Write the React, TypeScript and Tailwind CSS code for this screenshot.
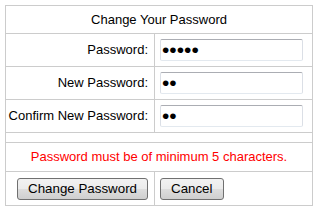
import React from "react";

const font = { fontFamily: '"Liberation Sans", Arial, sans-serif' };

function PasswordField({ value }: { value: string }) {
  return (
    <input
      type="password"
      defaultValue={value}
      readOnly
      className="h-[22px] w-[143px] rounded-[2px] border border-t-[#abadb3] border-x-[#dbdfe6] border-b-[#e3e9ef] bg-white px-[1px] text-[21px] leading-none text-black outline-none"
      style={font}
    />
  );
}

function Row({ label, value }: { label: string; value: string }) {
  return (
    <div className="flex h-[33px] border-t border-[#cccccc]">
      <div className="flex w-[148px] items-center justify-end pr-[6px] text-[13px] text-black">{label}</div>
      <div className="flex w-[158px] items-center border-l border-[#cccccc] pl-[5px]">
        <PasswordField value={value} />
      </div>
    </div>
  );
}

function ClassicButton({ children }: { children: React.ReactNode }) {
  return (
    <button
      className="h-[22px] rounded-[3px] border border-[#707070] bg-[linear-gradient(#f2f2f2_0%,#ebebeb_50%,#dddddd_51%,#cfcfcf_100%)] px-[10px] text-[13.33px] leading-none text-black"
      style={font}
    >
      {children}
    </button>
  );
}

export default function App() {
  return (
    <div className="h-[211px] w-[318px] bg-white pl-[5px] pt-[5px]" style={font}>
      <div className="w-[308px] border border-[#cccccc]">
        <div className="flex h-[27px] items-center justify-center text-[13px] text-black">Change Your Password</div>
        <Row label="Password:" value="abcde" />
        <Row label="New Password:" value="ab" />
        <Row label="Confirm New Password:" value="ab" />
        <div className="h-[10px] border-t border-[#cccccc]" />
        <div className="flex h-[29px] items-center justify-center border-t border-[#cccccc] text-[13px] text-[#ff0000]">
          Password must be of minimum 5 characters.
        </div>
        <div className="flex h-[34px] border-t border-[#cccccc]">
          <div className="flex w-[148px] items-center justify-end pr-[6px]">
            <ClassicButton>Change Password</ClassicButton>
          </div>
          <div className="flex w-[158px] items-center border-l border-[#cccccc] pl-[5px]">
            <ClassicButton>Cancel</ClassicButton>
          </div>
        </div>
      </div>
    </div>
  );
}
